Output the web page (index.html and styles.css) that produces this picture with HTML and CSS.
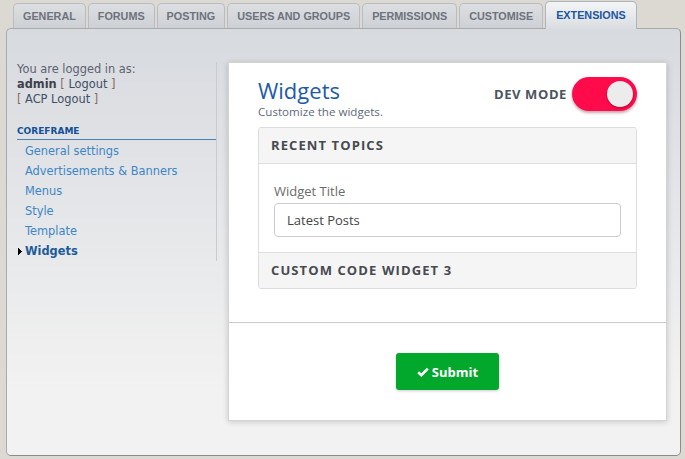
FILE: index.html
```html
<!DOCTYPE html>
<html lang="en">
<head>
<meta charset="utf-8">
<title>Coreframe - Widgets</title>
<link rel="stylesheet" href="styles.css">
</head>
<body>
<nav class="tabs">
  <a class="tab">General</a>
  <a class="tab">Forums</a>
  <a class="tab">Posting</a>
  <a class="tab">Users and groups</a>
  <a class="tab">Permissions</a>
  <a class="tab">Customise</a>
  <a class="tab active">Extensions</a>
</nav>
<div class="panel">
  <aside class="side">
    <p class="login">You are logged in as:<br><b>admin</b> <span class="br">[</span> <a class="lnk">Logout</a> <span class="br">]</span><br><span class="br">[</span> <a class="lnk">ACP Logout</a> <span class="br">]</span></p>
    <h3 class="side-title">Coreframe</h3>
    <ul class="menu">
      <li><a>General settings</a></li>
      <li><a>Advertisements &amp; Banners</a></li>
      <li><a>Menus</a></li>
      <li><a>Style</a></li>
      <li><a>Template</a></li>
      <li class="current"><svg class="arrow" width="4" height="7" viewBox="0 0 4 7"><path d="M0 0h1v1h1v1h1v1h1v1h-1v1h-1v1h-1v1h-1z" fill="#000"/></svg><a>Widgets</a></li>
    </ul>
  </aside>
  <main class="card">
    <div class="card-body">
      <div class="head">
        <div>
          <h1 class="title">Widgets</h1>
          <p class="sub">Customize the widgets.</p>
        </div>
        <div class="dev">
          <span class="dev-label">Dev Mode</span>
          <span class="toggle"><span class="knob"></span></span>
        </div>
      </div>
      <div class="acc">
        <div class="acc-h">Recent Topics</div>
        <div class="acc-b">
          <label class="lbl">Widget Title</label>
          <div class="input">Latest Posts</div>
        </div>
        <div class="acc-h last">Custom Code Widget 3</div>
      </div>
    </div>
    <div class="card-foot">
      <button class="btn"><svg width="12" height="10" viewBox="0 0 12 10"><path d="M1.2 5.2 L4.3 8.2 L10.8 1.6" fill="none" stroke="#fff" stroke-width="2.6"/></svg>Submit</button>
    </div>
  </main>
</div>
</body>
</html>
```
FILE: styles.css
```css
* { box-sizing: border-box; }
html, body { margin: 0; padding: 0; }
body {
  background: #dcd9d2;
  width: 685px;
  height: 459px;
  overflow: hidden;
  font-family: "DejaVu Sans", Verdana, sans-serif;
}
.tabs {
  display: flex;
  align-items: flex-end;
  gap: 2px;
  height: 28px;
  padding-left: 13px;
  position: relative;
  z-index: 2;
}
.tab {
  height: 25px;
  line-height: 25px;
  padding: 0 9px;
  border: 1px solid #b9bcc1;
  border-bottom: none;
  border-radius: 5px 5px 0 0;
  background: linear-gradient(#dcdee2, #cdd0d4);
  color: #6d727b;
  font-family: "Liberation Sans", Arial, sans-serif;
  font-weight: bold;
  font-size: 10.8px;
  text-transform: uppercase;
}
.tab.active {
  height: 28px;
  line-height: 27px;
  margin-bottom: -1px;
  padding: 0 10px;
  background: linear-gradient(#f3f4f5, #dadde1);
  color: #1a56a0;
  border-color: #b0b4ba;
}
.panel {
  margin: 0 4px 0 6px;
  height: 428px;
  border: 1px solid #a9aaab;
  border-right-color: #8c8c8c;
  border-bottom-color: #8a8a8a;
  border-radius: 5px;
  background: linear-gradient(#d7dadf, #f2f2f2 85%);
  display: flex;
  align-items: flex-start;
  padding-top: 33px;
}
.side {
  width: 210px;
  padding-left: 10px;
  border-right: 1px solid #c8cbcf;
  font-size: 11.4px;
}
.login {
  margin: 0;
  line-height: 15px;
  color: #5c6270;
}
.login b { color: #3d424c; }
.br { color: #8a6d5a; }
.lnk { color: #3e4e66; }
.side-title {
  margin: 18px 0 0;
  font-size: 9px;
  line-height: 12px;
  padding-bottom: 2px;
  text-transform: uppercase;
  color: #115098;
  border-bottom: 1px solid #4a84b4;
}
.menu {
  list-style: none;
  margin: 1px 0 0;
  padding: 0;
}
.menu li {
  height: 20px;
  line-height: 20px;
  padding-left: 8px;
  color: #3d86c6;
  position: relative;
}
.menu li.current a { font-weight: bold; color: #1e5b98; }
.arrow { position: absolute; left: 1px; top: 7px; }
.card {
  margin-left: 11px;
  width: 439px;
  height: 359px;
  background: #fff;
  border: 1px solid #d4d4d4;
  box-shadow: 0 1px 6px rgba(0,0,0,0.18);
  font-family: "Open Sans", sans-serif;
  display: flex;
  flex-direction: column;
}
.card-body {
  padding: 13px 29px 33px;
  border-bottom: 1px solid #cacaca;
}
.head {
  display: flex;
  justify-content: space-between;
  align-items: flex-start;
}
.title {
  margin: 0;
  font-size: 22px;
  line-height: 28px;
  font-weight: normal;
  color: #1e5ba6;
}
.sub {
  margin: 0;
  font-size: 11.6px;
  line-height: 16px;
  color: #5e6a7e;
}
.dev {
  display: flex;
  align-items: center;
  gap: 5px;
  margin-top: 1px;
}
.dev-label {
  font-size: 13px;
  font-weight: bold;
  text-transform: uppercase;
  letter-spacing: 0.6px;
  color: #4d5360;
}
.toggle {
  width: 65px;
  height: 34px;
  border-radius: 17px;
  background: #ff0a4b;
  box-shadow: 0 2px 3px rgba(90,0,20,0.35);
  position: relative;
  display: block;
}
.knob {
  position: absolute;
  right: 4px;
  top: 4px;
  width: 26px;
  height: 26px;
  border-radius: 50%;
  background: #ececec;
  box-shadow: 0 1px 2px rgba(0,0,0,0.35);
}
.acc {
  margin-top: 7px;
  border: 1px solid #dddddd;
  border-radius: 3px;
  overflow: hidden;
}
.acc-h {
  height: 36px;
  line-height: 35px;
  padding: 0 12px;
  background: #f5f5f5;
  border-bottom: 1px solid #dddddd;
  font-size: 13px;
  font-weight: bold;
  letter-spacing: 1.1px;
  text-transform: uppercase;
  color: #474a50;
}
.acc-h.last { border-bottom: none; border-top: 1px solid #dddddd; height: 36px; }
.acc-b {
  padding: 17px 15px 15px;
}
.lbl {
  display: block;
  font-size: 13px;
  line-height: 20px;
  color: #6b6b6b;
  margin-bottom: 2px;
}
.input {
  height: 34px;
  border: 1px solid #cccccc;
  border-radius: 4px;
  padding: 0 12px;
  line-height: 32px;
  font-size: 13px;
  color: #444;
}
.card-foot {
  flex: 1;
  display: flex;
  justify-content: center;
  align-items: flex-start;
  padding-top: 30px;
}
.btn {
  height: 37px;
  width: 103px;
  border: none;
  border-radius: 3px;
  background: #01a82b;
  color: #fff;
  font-family: "Open Sans", sans-serif;
  font-weight: bold;
  font-size: 13px;
  display: inline-flex;
  align-items: center;
  justify-content: center;
  gap: 3px;
  box-shadow: 0 1px 3px rgba(0,0,0,0.2);
  padding: 0;
}
```
